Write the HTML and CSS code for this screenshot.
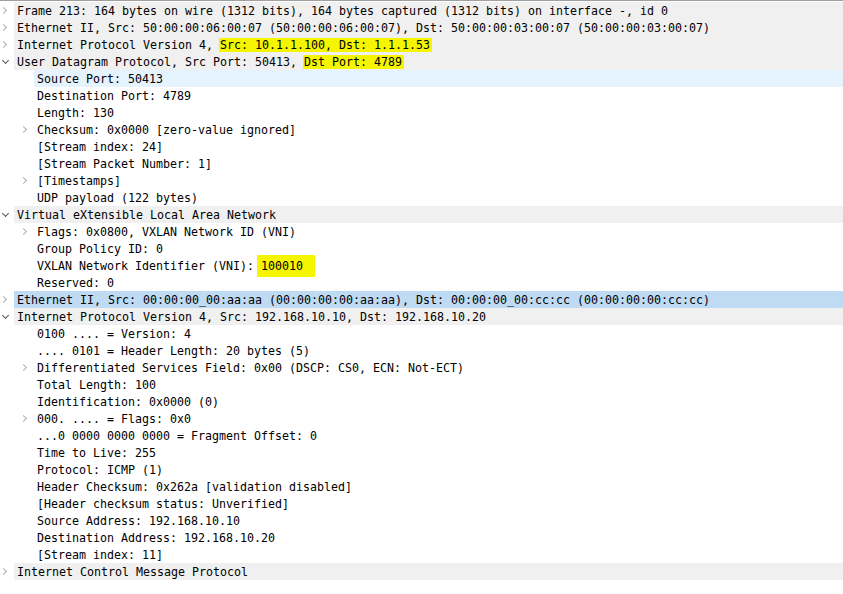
FILE: index.html
```html
<!DOCTYPE html>
<html lang="en">
<head>
    <meta charset="UTF-8">
    <title>Packet details</title>
    <link rel="stylesheet" href="styles.css">
</head>
<body>

<div class="tree">
    <div class="row top closed"><span class="arrow"></span><span class="label">Frame 213: 164 bytes on wire (1312 bits), 164 bytes captured (1312 bits) on interface -, id 0</span></div>
    <div class="row top closed"><span class="arrow"></span><span class="label">Ethernet II, Src: 50:00:00:06:00:07 (50:00:00:06:00:07), Dst: 50:00:00:03:00:07 (50:00:00:03:00:07)</span></div>
    <div class="row top closed"><span class="arrow"></span><span class="label">Internet Protocol Version 4, <span class="hl">Src: 10.1.1.100, Dst: 1.1.1.53</span></span></div>
    <div class="row top open"><span class="arrow"></span><span class="label">User Datagram Protocol, Src Port: 50413, <span class="hl">Dst Port: 4789</span></span></div>
    <div class="row sub hover"><span class="arrow"></span><span class="label">Source Port: 50413</span></div>
    <div class="row sub"><span class="arrow"></span><span class="label">Destination Port: 4789</span></div>
    <div class="row sub"><span class="arrow"></span><span class="label">Length: 130</span></div>
    <div class="row sub closed"><span class="arrow"></span><span class="label">Checksum: 0x0000 [zero-value ignored]</span></div>
    <div class="row sub"><span class="arrow"></span><span class="label">[Stream index: 24]</span></div>
    <div class="row sub"><span class="arrow"></span><span class="label">[Stream Packet Number: 1]</span></div>
    <div class="row sub closed"><span class="arrow"></span><span class="label">[Timestamps]</span></div>
    <div class="row sub"><span class="arrow"></span><span class="label">UDP payload (122 bytes)</span></div>
    <div class="row top open"><span class="arrow"></span><span class="label">Virtual eXtensible Local Area Network</span></div>
    <div class="row sub closed"><span class="arrow"></span><span class="label">Flags: 0x0800, VXLAN Network ID (VNI)</span></div>
    <div class="row sub"><span class="arrow"></span><span class="label">Group Policy ID: 0</span></div>
    <div class="row sub"><span class="arrow"></span><span class="label">VXLAN Network Identifier (VNI): <span class="hl big">100010</span></span></div>
    <div class="row sub"><span class="arrow"></span><span class="label">Reserved: 0</span></div>
    <div class="row top closed selected"><span class="arrow"></span><span class="label">Ethernet II, Src: 00:00:00_00:aa:aa (00:00:00:00:aa:aa), Dst: 00:00:00_00:cc:cc (00:00:00:00:cc:cc)</span></div>
    <div class="row top open"><span class="arrow"></span><span class="label">Internet Protocol Version 4, Src: 192.168.10.10, Dst: 192.168.10.20</span></div>
    <div class="row sub"><span class="arrow"></span><span class="label">0100 .... = Version: 4</span></div>
    <div class="row sub"><span class="arrow"></span><span class="label">.... 0101 = Header Length: 20 bytes (5)</span></div>
    <div class="row sub closed"><span class="arrow"></span><span class="label">Differentiated Services Field: 0x00 (DSCP: CS0, ECN: Not-ECT)</span></div>
    <div class="row sub"><span class="arrow"></span><span class="label">Total Length: 100</span></div>
    <div class="row sub"><span class="arrow"></span><span class="label">Identification: 0x0000 (0)</span></div>
    <div class="row sub closed"><span class="arrow"></span><span class="label">000. .... = Flags: 0x0</span></div>
    <div class="row sub"><span class="arrow"></span><span class="label">...0 0000 0000 0000 = Fragment Offset: 0</span></div>
    <div class="row sub"><span class="arrow"></span><span class="label">Time to Live: 255</span></div>
    <div class="row sub"><span class="arrow"></span><span class="label">Protocol: ICMP (1)</span></div>
    <div class="row sub"><span class="arrow"></span><span class="label">Header Checksum: 0x262a [validation disabled]</span></div>
    <div class="row sub"><span class="arrow"></span><span class="label">[Header checksum status: Unverified]</span></div>
    <div class="row sub"><span class="arrow"></span><span class="label">Source Address: 192.168.10.10</span></div>
    <div class="row sub"><span class="arrow"></span><span class="label">Destination Address: 192.168.10.20</span></div>
    <div class="row sub"><span class="arrow"></span><span class="label">[Stream index: 11]</span></div>
    <div class="row top closed"><span class="arrow"></span><span class="label">Internet Control Message Protocol</span></div>
</div>

</body>
</html>
```

FILE: styles.css
```css
body {
    margin: 0;
    background-color: white;
    font-family: "DejaVu Sans Mono", "Liberation Mono", monospace;
    font-size: 11.63px;
    color: #000;
}
.tree {
    border-top: 1px solid #a0a0a0;
    padding-top: 1px;
}
.row {
    display: flex;
    height: 17px;
    white-space: pre;
}
.row.sub {
    padding-left: 20px;
}
.arrow {
    width: 14px;
    flex: none;
    display: flex;
    align-items: center;
}
.label {
    flex: 1;
    height: 17px;
    line-height: 18px;
    padding-left: 3px;
}
.top .label {
    background-color: #f0f0f0;
}
.hover .label {
    background-color: #e5f3ff;
}
.selected .label {
    background-color: #bfdaf3;
}
/* chevrons */
.closed .arrow::before,
.open .arrow::before {
    content: "";
    display: block;
    width: 5px;
    height: 5px;
    box-sizing: border-box;
    border-right: 1.3px solid #b0b0b0;
    border-bottom: 1.3px solid #b0b0b0;
}
.closed .arrow::before {
    margin-left: 1px;
    transform: rotate(-45deg);
}
.open .arrow::before {
    margin-left: 3px;
    margin-top: -3px;
    border-color: #555;
    transform: rotate(45deg);
}
.hl {
    background-color: #f5f500;
    padding: 0 2px 0 1px;
    margin: 0 -2px 0 -1px;
}
.hl.big {
    display: inline-block;
    line-height: 22px;
    height: 22px;
    margin: -2px 0 0 -4px;
    padding: 0 12px 0 4px;
    vertical-align: top;
}
```
